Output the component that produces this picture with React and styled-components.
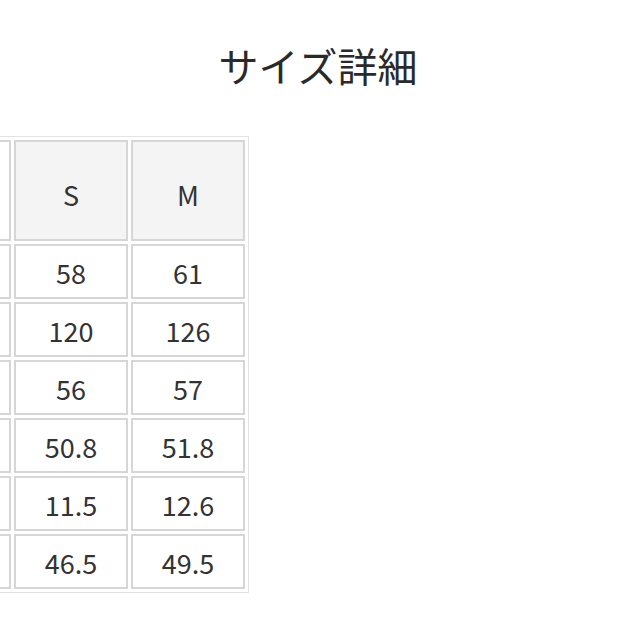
import React from "react";
import styled, {createGlobalStyle} from 'styled-components';

const GlobalStyle = createGlobalStyle`
  html, body {
    margin: 0;
    padding: 0;
    background: #ffffff;
  }

  body {
    font-family: "Noto Sans CJK JP", "Noto Sans", sans-serif;
    color: #333333;
    overflow: hidden;
  }
`;

const sizes = ['S', 'M'];

// the label column sits past the left edge of the shot, only its border shows
const rows = [
    {id: 'length', values: ['58', '61']},
    {id: 'width', values: ['120', '126']},
    {id: 'shoulder', values: ['56', '57']},
    {id: 'sleeve', values: ['50.8', '51.8']},
    {id: 'cuff', values: ['11.5', '12.6']},
    {id: 'hem', values: ['46.5', '49.5']},
];

const App = () => {
    return (
        <Page>
            <GlobalStyle/>
            <Title>サイズ詳細</Title>
            <TableScroll>
                <SizeTable>
                    <thead>
                    <tr>
                        <HeadCell $first/>
                        {sizes.map(size => <HeadCell key={size}>{size}</HeadCell>)}
                    </tr>
                    </thead>
                    <tbody>
                    {
                        rows.map(row => (
                            <tr key={row.id}>
                                <LabelCell/>
                                {row.values.map((value, i) => <ValueCell key={`${row.id}_${i}`}>{value}</ValueCell>)}
                            </tr>
                        ))
                    }
                    </tbody>
                </SizeTable>
            </TableScroll>
        </Page>
    )
}

const Page = styled.div`
  width: 636px;
  height: 636px;
  display: flex;
  flex-direction: column;
`;

const Title = styled.h2`
  margin: 45px 0 0;
  height: 40px;
  font-size: 40px;
  line-height: 1;
  font-weight: 400;
  text-align: center;
  color: #2a2a2a;
  letter-spacing: 0;
`;

const TableScroll = styled.div`
  margin-top: 51px;
  margin-left: -113px;
`;

const SizeTable = styled.table`
  border-collapse: separate;
  border-spacing: 3px;
  border: 1px solid #e2e2e2;
  table-layout: fixed;
`;

const Cell = styled.td`
  box-sizing: border-box;
  border: 2px solid #d6d6d6;
  width: 114px;
  height: 55px;
  padding: 4px 0 0;
  text-align: center;
  vertical-align: middle;
  font-size: 27px;
  font-weight: 400;
  color: #333333;
  line-height: 1.2;
`;

const HeadCell = styled(Cell).attrs({as: 'th'})`
  height: 101px;
  padding-top: 10px;
  width: ${props => (props.$first ? '120px' : '114px')};
  background: ${props => (props.$first ? '#ffffff' : '#f4f4f4')};
`;

const LabelCell = styled(Cell)`
  width: 120px;
  background: #ffffff;
`;

const ValueCell = styled(Cell)`
  background: #ffffff;
`;

export default App;
